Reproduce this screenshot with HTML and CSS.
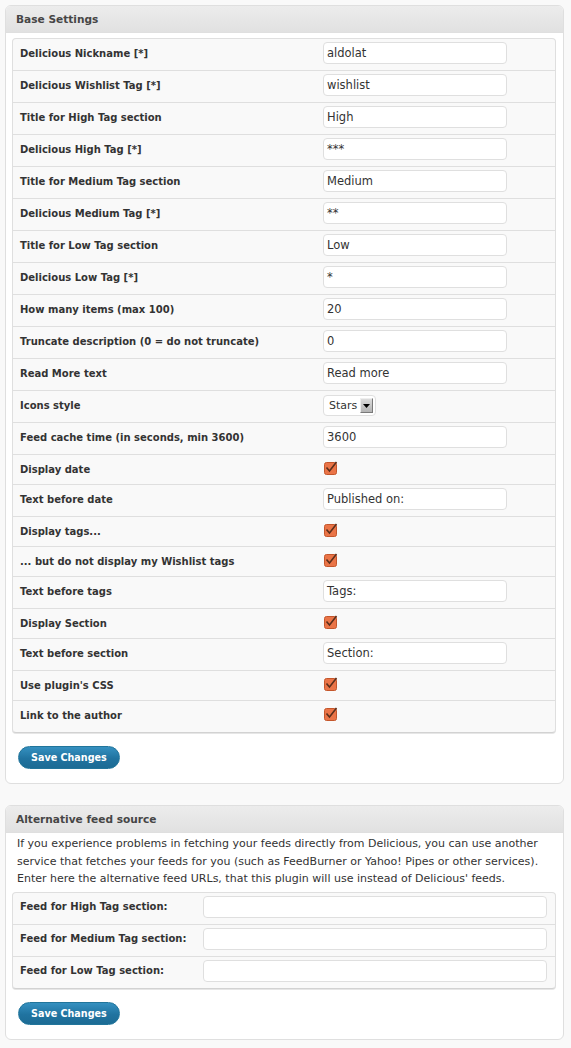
FILE: index.html
```
<!DOCTYPE html>
<html>
<head>
<meta charset="utf-8">
<link rel="stylesheet" href="styles.css">
</head>
<body>
<div class="panel">
  <div class="panel-head">Base Settings</div>
  <div class="panel-body">
    <div class="table t1">
      <div class="row"><div class="lbl">Delicious Nickname [*]</div><div class="fld"><div class="input">aldolat</div></div></div>
      <div class="row"><div class="lbl">Delicious Wishlist Tag [*]</div><div class="fld"><div class="input">wishlist</div></div></div>
      <div class="row"><div class="lbl">Title for High Tag section</div><div class="fld"><div class="input">High</div></div></div>
      <div class="row"><div class="lbl">Delicious High Tag [*]</div><div class="fld"><div class="input">***</div></div></div>
      <div class="row"><div class="lbl">Title for Medium Tag section</div><div class="fld"><div class="input">Medium</div></div></div>
      <div class="row"><div class="lbl">Delicious Medium Tag [*]</div><div class="fld"><div class="input">**</div></div></div>
      <div class="row"><div class="lbl">Title for Low Tag section</div><div class="fld"><div class="input">Low</div></div></div>
      <div class="row"><div class="lbl">Delicious Low Tag [*]</div><div class="fld"><div class="input">*</div></div></div>
      <div class="row"><div class="lbl">How many items (max 100)</div><div class="fld"><div class="input">20</div></div></div>
      <div class="row"><div class="lbl">Truncate description (0 = do not truncate)</div><div class="fld"><div class="input">0</div></div></div>
      <div class="row"><div class="lbl">Read More text</div><div class="fld"><div class="input">Read more</div></div></div>
      <div class="row"><div class="lbl">Icons style</div><div class="fld"><div class="select"><span>Stars</span><span class="arrow"><svg width="9" height="6" viewBox="0 0 9 6"><path d="M1 1h7L4.5 5z" fill="#000"/></svg></span></div></div></div>
      <div class="row"><div class="lbl">Feed cache time (in seconds, min 3600)</div><div class="fld"><div class="input">3600</div></div></div>
      <div class="row chk"><div class="lbl">Display date</div><div class="fld"><svg class="cb" width="15" height="14" viewBox="0 0 15 14"><rect x="0.5" y="1.5" width="12" height="12" rx="2" fill="#ea7447" stroke="#c4562b"/><path d="M2.5 6.5l3 3.5L12.5 1" fill="none" stroke="#5b2f1c" stroke-width="1.6"/></svg></div></div>
      <div class="row"><div class="lbl">Text before date</div><div class="fld"><div class="input">Published on:</div></div></div>
      <div class="row chk"><div class="lbl">Display tags...</div><div class="fld"><svg class="cb" width="15" height="14" viewBox="0 0 15 14"><rect x="0.5" y="1.5" width="12" height="12" rx="2" fill="#ea7447" stroke="#c4562b"/><path d="M2.5 6.5l3 3.5L12.5 1" fill="none" stroke="#5b2f1c" stroke-width="1.6"/></svg></div></div>
      <div class="row chk"><div class="lbl">... but do not display my Wishlist tags</div><div class="fld"><svg class="cb" width="15" height="14" viewBox="0 0 15 14"><rect x="0.5" y="1.5" width="12" height="12" rx="2" fill="#ea7447" stroke="#c4562b"/><path d="M2.5 6.5l3 3.5L12.5 1" fill="none" stroke="#5b2f1c" stroke-width="1.6"/></svg></div></div>
      <div class="row"><div class="lbl">Text before tags</div><div class="fld"><div class="input">Tags:</div></div></div>
      <div class="row chk"><div class="lbl">Display Section</div><div class="fld"><svg class="cb" width="15" height="14" viewBox="0 0 15 14"><rect x="0.5" y="1.5" width="12" height="12" rx="2" fill="#ea7447" stroke="#c4562b"/><path d="M2.5 6.5l3 3.5L12.5 1" fill="none" stroke="#5b2f1c" stroke-width="1.6"/></svg></div></div>
      <div class="row"><div class="lbl">Text before section</div><div class="fld"><div class="input">Section:</div></div></div>
      <div class="row chk"><div class="lbl">Use plugin's CSS</div><div class="fld"><svg class="cb" width="15" height="14" viewBox="0 0 15 14"><rect x="0.5" y="1.5" width="12" height="12" rx="2" fill="#ea7447" stroke="#c4562b"/><path d="M2.5 6.5l3 3.5L12.5 1" fill="none" stroke="#5b2f1c" stroke-width="1.6"/></svg></div></div>
      <div class="row chk"><div class="lbl">Link to the author</div><div class="fld"><svg class="cb" width="15" height="14" viewBox="0 0 15 14"><rect x="0.5" y="1.5" width="12" height="12" rx="2" fill="#ea7447" stroke="#c4562b"/><path d="M2.5 6.5l3 3.5L12.5 1" fill="none" stroke="#5b2f1c" stroke-width="1.6"/></svg></div></div>
    </div>
    <div class="actions"><span class="btn">Save Changes</span></div>
  </div>
</div>

<div class="panel p2">
  <div class="panel-head">Alternative feed source</div>
  <div class="panel-body">
    <p class="desc">If you experience problems in fetching your feeds directly from Delicious, you can use another service that fetches your feeds for you (such as FeedBurner or Yahoo! Pipes or other services). Enter here the alternative feed URLs, that this plugin will use instead of Delicious' feeds.</p>
    <div class="table t2">
      <div class="row"><div class="lbl">Feed for High Tag section:</div><div class="fld"><div class="input wide"></div></div></div>
      <div class="row"><div class="lbl">Feed for Medium Tag section:</div><div class="fld"><div class="input wide"></div></div></div>
      <div class="row"><div class="lbl">Feed for Low Tag section:</div><div class="fld"><div class="input wide"></div></div></div>
    </div>
    <div class="actions"><span class="btn">Save Changes</span></div>
  </div>
</div>
</body>
</html>
```
FILE: styles.css
```
html, body {
  margin: 0;
  padding: 0;
  background: #f9f9f9;
}
body {
  font-family: "DejaVu Sans", "Bitstream Vera Sans", sans-serif;
  color: #333;
  padding: 5px 7px 0 5px;
}
.panel {
  background: #fff;
  border: 1px solid #dfdfdf;
  border-radius: 6px;
  overflow: hidden;
}
.p2 {
  margin-top: 21px;
}
.panel-head {
  height: 26px;
  line-height: 26px;
  padding-left: 10px;
  font-size: 10.6px;
  font-weight: bold;
  color: #464646;
  background: linear-gradient(#ececec, #e1e1e1);
  border-bottom: 1px solid #dfdfdf;
}
.panel-body {
  padding: 5px 7px 14px 6px;
}
.table {
  background: #f9f9f9;
  border: 1px solid #dfdfdf;
  border-bottom-color: #d2d2d2;
  border-radius: 4px;
  box-shadow: 0 1px 0 #e6e6e6;
}
.row {
  display: grid;
  height: 31px;
  border-bottom: 1px solid #dfdfdf;
}
.row:last-child {
  border-bottom: none;
}
.t1 .row {
  grid-template-columns: 310px 1fr;
}
.t1 .row.chk {
  height: 29px;
}
.t1 .row.chk:last-child {
  height: 31px;
}
.t2 .row {
  grid-template-columns: 190px 1fr;
}
.lbl {
  font-size: 10px;
  font-weight: bold;
  color: #333;
  padding: 8px 0 0 7px;
  line-height: 13px;
}
.fld {
  padding-top: 3px;
}
.input {
  box-sizing: border-box;
  width: 184px;
  height: 22px;
  border: 1px solid #dfdfdf;
  border-radius: 4px;
  background: #fff;
  font-size: 11.5px;
  line-height: 20px;
  padding-left: 3px;
  color: #333;
}
.input.wide {
  width: 344px;
}
.select {
  box-sizing: border-box;
  display: inline-flex;
  align-items: center;
  gap: 3px;
  height: 21px;
  width: 53px;
  border: 1px solid #dfdfdf;
  border-radius: 4px;
  background: #fff;
  font-size: 11px;
  padding-left: 5px;
  color: #333;
}
.arrow {
  display: inline-flex;
  align-items: center;
  justify-content: center;
  width: 13px;
  height: 15px;
  box-sizing: border-box;
  background: linear-gradient(#dcdcdc, #b4b4b4);
  border: 1px solid #7a7a7a;
  border-top-color: #eee;
  border-left-color: #eee;
}
.cb {
  display: block;
  margin: 3px 0 0 1px;
}
.actions {
  padding: 13px 0 0 6px;
}
.btn {
  display: inline-block;
  height: 23px;
  line-height: 22px;
  padding: 0 12px;
  border-radius: 12px;
  background: linear-gradient(#3590c0, #2073a0 55%, #1c6b94);
  border: 1px solid #21759b;
  box-sizing: border-box;
  color: #fff;
  font-size: 9.6px;
  font-weight: bold;
}
.desc {
  margin: 0;
  padding: 0 0 0 5px;
  font-size: 11px;
  line-height: 17.5px;
  color: #333;
}
.p2 .panel-body {
  padding-top: 2px;
}
.t2 {
  margin-top: 4px;
}
.t2 .lbl {
  padding-top: 7px;
}
.p2 .actions {
  padding-top: 13px;
}
```
